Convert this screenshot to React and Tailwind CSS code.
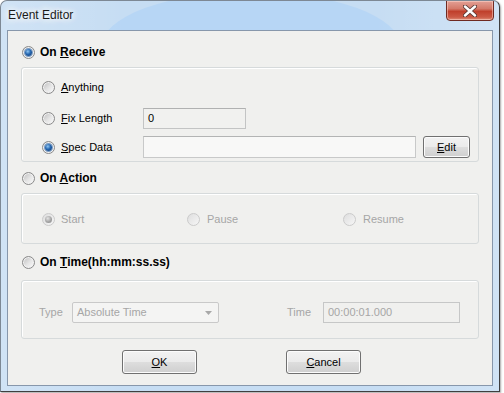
import React from "react";

function Radio({ checked, disabled }) {
  return (
    <span
      className={
        disabled
          ? "flex items-center justify-center w-[13px] h-[13px] shrink-0 rounded-full border border-[#cbcbcb] bg-[linear-gradient(135deg,#dedede,#f6f6f6)]"
          : "flex items-center justify-center w-[13px] h-[13px] shrink-0 rounded-full border border-[#8a8a8a] bg-[linear-gradient(135deg,#bdbdbd,#e6e6e6_55%,#fbfbfb)] shadow-[inset_0_0_0_1px_#f2f2f2]"
      }
    >
      {checked && !disabled && (
        <span className="w-[7px] h-[7px] rounded-full bg-[radial-gradient(circle_at_40%_35%,#8fc6f2,#2667b0_45%,#0c3672)] shadow-[0_0_0_1px_#7a9cc4]" />
      )}
      {checked && disabled && (
        <span className="w-[7px] h-[7px] rounded-full bg-[radial-gradient(circle_at_40%_35%,#e4e4e4,#a4a4a4_55%,#888888)]" />
      )}
    </span>
  );
}

function Btn({ children, w }) {
  return (
    <div
      className={`${w} h-full flex items-center justify-center rounded-[3px] border border-[#707070] bg-[linear-gradient(#f2f2f2_0%,#ebebeb_48%,#dddddd_52%,#cfcfcf_100%)] shadow-[inset_0_0_0_1px_#fcfcfc] text-[11px] text-black`}
    >
      {children}
    </div>
  );
}

export default function App() {
  return (
    <div className="w-[504px] h-[393px] bg-white overflow-hidden font-['Liberation_Sans',Arial,sans-serif]">
      <div className="relative w-[500px] h-[392px] flex flex-col rounded-t-[7px] border border-[#3f3f3f] border-t-[#7d8894] border-l-[#7d8894] bg-[#c6ddf3] overflow-hidden shadow-[1px_1px_2px_rgba(0,0,0,0.35)]">
        {/* aero arc decoration */}
        <div className="absolute left-[100px] top-[-9px] w-[300px] h-[110px] rounded-[50%] bg-[#b7d6f5]" />
        <div className="absolute inset-0 bg-[linear-gradient(90deg,rgba(255,255,255,0.18),rgba(255,255,255,0)_25%,rgba(255,255,255,0)_75%,rgba(255,255,255,0.18))]" />

        {/* title bar */}
        <div className="relative h-[29px] flex items-start shrink-0">
          <span className="ml-[7px] mt-[7px] text-[12px] leading-[15px] text-[#1a1a1a] [text-shadow:0_0_6px_#ffffff,0_0_8px_#ffffff,0_0_10px_#ffffff]">
            Event Editor
          </span>
          <div className="ml-auto mr-[5px] mt-[-1px] w-[48px] h-[21px] rounded-b-[4px] border border-[#6e2a22] bg-[linear-gradient(#e3a095_0%,#d47a6a_40%,#c0402c_55%,#cc5a45_85%,#de8f7a_100%)] shadow-[inset_0_0_0_1px_rgba(255,220,210,0.5)] flex items-center justify-center">
            <svg width="14" height="12" viewBox="0 0 14 12">
              <path d="M2 1.5 L12 10.5 M12 1.5 L2 10.5" stroke="#5a3a36" strokeWidth="4.2" strokeLinecap="round" />
              <path d="M2 1.5 L12 10.5 M12 1.5 L2 10.5" stroke="#ffffff" strokeWidth="2.4" strokeLinecap="round" />
            </svg>
          </div>
        </div>

        {/* client area */}
        <div className="relative mx-[6px] h-[356px] border border-[#8797ab] bg-[#f0f0ee] flex flex-col text-[11px] text-black">
          {/* On Receive */}
          <div className="mt-[11px] h-[20px] flex items-center pl-[14px] gap-[5px]">
            <Radio checked />
            <span className="font-bold text-[12px]">
              On <u>R</u>eceive
            </span>
          </div>
          <div className="mt-[5px] ml-[13px] w-[458px] h-[95px] rounded-[3px] border border-[#d6dadb] shadow-[inset_1px_1px_0_#ffffff] flex flex-col pl-[20px]">
            <div className="mt-[9px] h-[20px] flex items-center gap-[6px]">
              <Radio />
              <span>
                <u>A</u>nything
              </span>
            </div>
            <div className="mt-[11px] h-[21px] flex items-center">
              <div className="w-[101px] flex items-center gap-[6px]">
                <Radio />
                <span>
                  <u>F</u>ix Length
                </span>
              </div>
              <div className="w-[103px] h-[21px] border border-[#c3c4c4] border-t-[#b0b1b1] bg-[#f1f1ef] flex items-center pl-[4px]">
                0
              </div>
            </div>
            <div className="mt-[7px] h-[22px] flex items-center">
              <div className="w-[101px] flex items-center gap-[6px]">
                <Radio checked />
                <span>
                  <u>S</u>pec Data
                </span>
              </div>
              <div className="w-[273px] h-[22px] border border-[#c8c9c9] border-t-[#b3b4b4] bg-[#f8f8f7]" />
              <div className="ml-[7px] h-[22px]">
                <Btn w="w-[47px]">
                  <span>
                    <u>E</u>dit
                  </span>
                </Btn>
              </div>
            </div>
          </div>

          {/* On Action */}
          <div className="mt-[6px] h-[20px] flex items-center pl-[14px] gap-[5px]">
            <Radio />
            <span className="font-bold text-[12px]">
              On <u>A</u>ction
            </span>
          </div>
          <div className="mt-[5px] ml-[13px] w-[458px] h-[51px] rounded-[3px] border border-[#d6dadb] shadow-[inset_1px_1px_0_#ffffff] flex flex-col pl-[20px]">
            <div className="mt-[15px] h-[20px] flex items-center text-[#a6a6a6]">
              <div className="w-[145px] flex items-center gap-[6px]">
                <Radio checked disabled />
                <span>Start</span>
              </div>
              <div className="w-[156px] flex items-center gap-[7px]">
                <Radio disabled />
                <span>Pause</span>
              </div>
              <div className="flex items-center gap-[7px]">
                <Radio disabled />
                <span>Resume</span>
              </div>
            </div>
          </div>

          {/* On Time */}
          <div className="mt-[8px] h-[20px] flex items-center pl-[14px] gap-[5px]">
            <Radio />
            <span className="font-bold text-[12px]">
              On <u>T</u>ime(hh:mm:ss.ss)
            </span>
          </div>
          <div className="mt-[8px] ml-[13px] w-[458px] h-[59px] rounded-[3px] border border-[#d6dadb] shadow-[inset_1px_1px_0_#ffffff] flex flex-col pl-[17px]">
            <div className="mt-[21px] h-[21px] flex items-center text-[#a6a6a6]">
              <div className="w-[33px]">Type</div>
              <div className="w-[147px] h-[21px] rounded-[2px] border border-[#c9c9c9] bg-[#f4f4f3] flex items-center pl-[4px] pr-[6px]">
                <span className="flex-1">Absolute Time</span>
                <svg width="7" height="4" viewBox="0 0 7 4">
                  <path d="M0 0 H7 L3.5 4 Z" fill="#a8a8a8" />
                </svg>
              </div>
              <div className="ml-[68px] w-[36px]">Time</div>
              <div className="w-[137px] h-[21px] border border-[#c6c7c7] bg-[#f0f0ee] flex items-center pl-[4px]">
                00:00:01.000
              </div>
            </div>
          </div>

          {/* Buttons */}
          <div className="mt-[11px] h-[24px] flex">
            <div className="ml-[114px] h-[24px]">
              <Btn w="w-[75px]">
                <span>
                  <u>O</u>K
                </span>
              </Btn>
            </div>
            <div className="ml-[89px] h-[24px]">
              <Btn w="w-[75px]">
                <span>
                  <u>C</u>ancel
                </span>
              </Btn>
            </div>
          </div>
        </div>
      </div>
    </div>
  );
}
